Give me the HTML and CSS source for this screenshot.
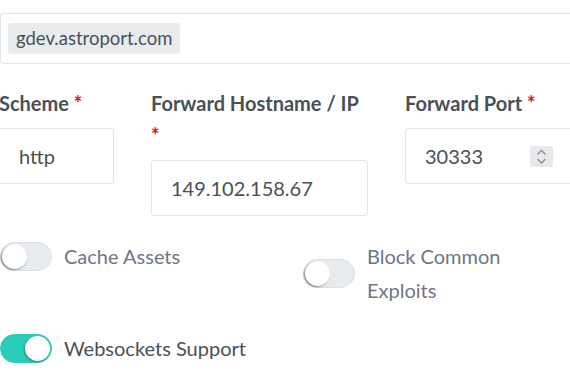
FILE: index.html
```html
<!DOCTYPE html>
<html>
<head>
  <title>Edit Proxy Host</title>
  <link rel="stylesheet" href="styles.css">
</head>
<body>
  <div class="domain-box">
    <span class="badge">gdev.astroport.com</span>
  </div>

  <div class="form-row">
    <div class="field col-scheme">
      <label>Scheme <span class="req">*</span></label>
      <div class="input">http</div>
    </div>

    <div class="field col-host">
      <label>Forward Hostname / IP <span class="req">*</span></label>
      <div class="input">149.102.158.67</div>
    </div>

    <div class="field col-port">
      <label>Forward Port <span class="req">*</span></label>
      <div class="input">
        <span class="value">30333</span>
        <span class="spinner">
          <svg width="23" height="21" viewBox="0 0 23 21">
            <path d="M7.5 8.5 L11.5 4.5 L15.5 8.5" fill="none" stroke="#8b8b93" stroke-width="1.3"/>
            <path d="M7.5 13 L11.5 17 L15.5 13" fill="none" stroke="#8b8b93" stroke-width="1.3"/>
          </svg>
        </span>
      </div>
    </div>
  </div>

  <div class="switches">
    <div class="switch-item">
      <span class="switch"></span>
      <span class="switch-text">Cache Assets</span>
    </div>
    <div class="switch-item">
      <span class="switch"></span>
      <span class="switch-text">Block Common Exploits</span>
    </div>
    <div class="switch-item">
      <span class="switch on"></span>
      <span class="switch-text on">Websockets Support</span>
    </div>
  </div>
</body>
</html>
```

FILE: styles.css
```css
body {
  margin: 0;
  background-color: #ffffff;
  font-family: Lato, "Noto Sans", sans-serif;
  font-size: 20px;
  color: #495057;
  overflow: hidden;
}

.domain-box {
  margin-top: 13px;
  margin-right: -20px;
  padding: 9px 7px;
  border: 1px solid #e0e5ec;
  border-right: none;
  border-radius: 3px 0 0 3px;
}

.badge {
  display: inline-block;
  height: 31px;
  line-height: 31px;
  padding: 0 8px;
  background-color: #e9ecef;
  border-radius: 3px;
  color: #495057;
  font-size: 18.5px;
}

.form-row {
  display: grid;
  grid-template-columns: 115px 217px 168px;
  column-gap: 37px;
  margin-top: 23px;
  margin-left: -1px;
}

.field label {
  display: block;
  font-weight: 700;
  line-height: 32px;
  margin-bottom: 9px;
  color: #495057;
}

.req {
  color: #cd201f;
}

.input {
  display: flex;
  align-items: center;
  justify-content: space-between;
  box-sizing: border-box;
  height: 56px;
  padding: 0 19px;
  border: 1px solid #e0e5ec;
  border-radius: 3px;
  color: #495057;
}

.spinner {
  display: flex;
  width: 23px;
  height: 21px;
  background-color: #e9e9ed;
  border-radius: 2px;
}

.switches {
  display: grid;
  grid-template-columns: 267px 230px;
  align-items: start;
  column-gap: 36px;
  row-gap: 24px;
  margin-top: 23px;
}

.switch-item {
  display: flex;
  align-items: center;
  gap: 12px;
}

.switch {
  position: relative;
  flex: none;
  box-sizing: border-box;
  width: 52px;
  height: 29px;
  background-color: #e9ecef;
  border: 1px solid #dadfe5;
  border-radius: 15px;
}

.switch::after {
  content: "";
  position: absolute;
  left: 1px;
  top: 1px;
  width: 25px;
  height: 25px;
  background-color: #ffffff;
  border-radius: 50%;
  box-shadow: -1px 1px 2px rgba(0, 0, 0, 0.45);
}

.switch.on {
  background-color: #2bcbba;
  border-color: #2bcbba;
}

.switch.on::after {
  left: auto;
  right: 1px;
  box-shadow: -1px 1px 2px rgba(0, 0, 0, 0.3);
}

.switch-text {
  line-height: 34px;
  color: #6e7687;
  max-width: 190px;
}

.switch-text.on {
  color: #495057;
  max-width: none;
}
```
